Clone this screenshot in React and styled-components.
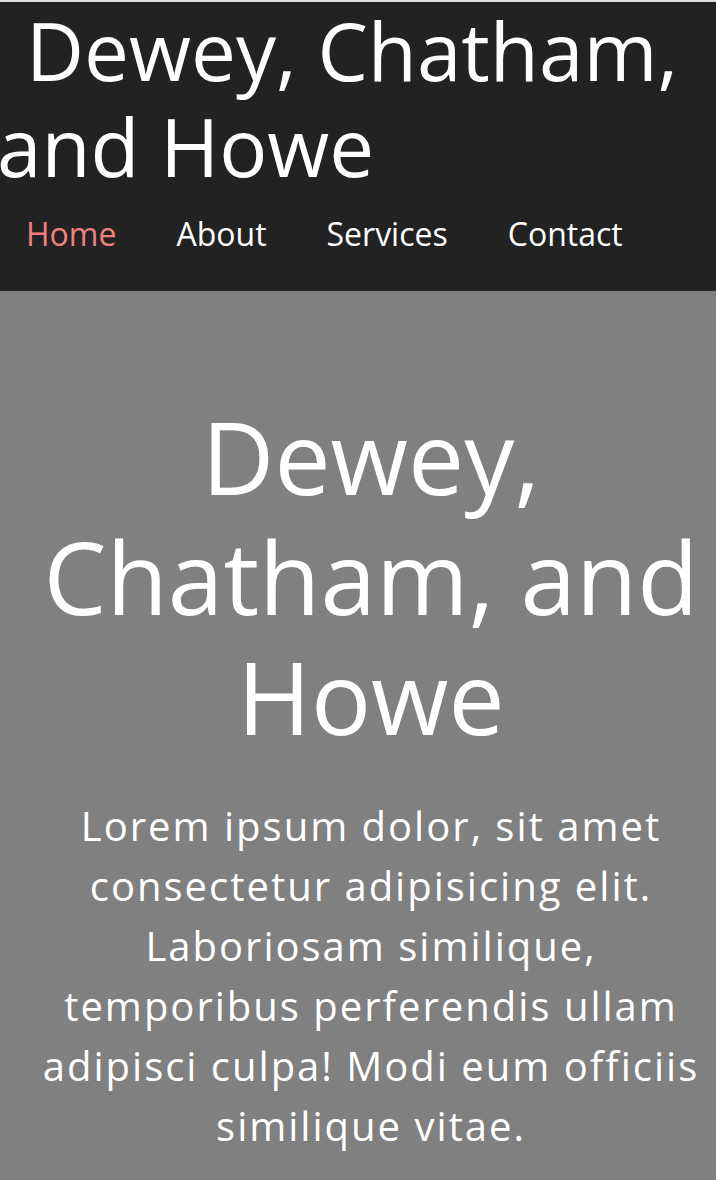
import React from 'react';
import styled, { createGlobalStyle } from 'styled-components';

const GlobalStyle = createGlobalStyle`
  html, body {
    margin: 0;
    padding: 0;
    background-color: gray;
  }
  body {
    font-family: "Open Sans", "DejaVu Sans", sans-serif;
    color: #ffffff;
  }
`;

const Header = styled.header`
  background-color: #222222;
  border-top: 2px solid #dddddd;
  padding-bottom: 36px;
`;

const Brand = styled.h1`
  margin: 0 0 0 -3px;
  font-size: 80px;
  font-weight: 400;
  line-height: 1.2;
  text-indent: 29px;
`;

const Nav = styled.nav`
  display: flex;
  gap: 60px;
  padding: 18px 0 0 26px;
`;

const NavLink = styled.a`
  font-size: 32px;
  color: ${props => (props.active ? 'lightcoral' : '#ffffff')};
  text-decoration: none;
`;

const Hero = styled.main`
  padding: 105px 0 24px 26px;
  text-align: center;
`;

const Title = styled.h1`
  margin: 0 0 40px;
  font-size: 100px;
  font-weight: 400;
  line-height: 1.2;
`;

const Blurb = styled.p`
  margin: 0;
  font-size: 40px;
  line-height: 1.5;
  letter-spacing: 2px;
`;

const links = ['Home', 'About', 'Services', 'Contact'];

const App = () => {
  return (
    <>
      <GlobalStyle />
      <Header>
        <Brand>Dewey, Chatham, and Howe</Brand>
        <Nav>
          {links.map(link => (
            <NavLink key={link} href="#" active={link === 'Home' ? 1 : 0}>
              {link}
            </NavLink>
          ))}
        </Nav>
      </Header>
      <Hero>
        <Title>Dewey, Chatham, and Howe</Title>
        <Blurb>
          Lorem ipsum dolor, sit amet consectetur adipisicing elit. Laboriosam
          similique, temporibus perferendis ullam adipisci culpa! Modi eum
          officiis similique vitae.
        </Blurb>
      </Hero>
    </>
  );
};

export default App;
